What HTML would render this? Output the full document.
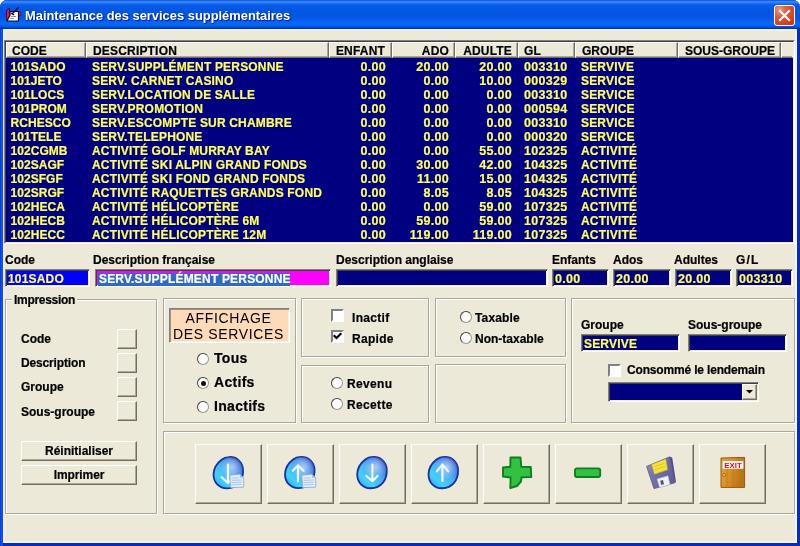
<!DOCTYPE html>
<html><head><meta charset="utf-8">
<style>
html,body{margin:0;padding:0;}
body{width:800px;height:546px;overflow:hidden;background:#fff;font-family:"Liberation Sans",sans-serif;font-weight:bold;font-size:12px;color:#000;position:relative;}
#win{position:absolute;left:0;top:0;width:800px;height:546px;background:linear-gradient(to right,#0A30D0 0px,#1656EE 1.5px,#0A46DA 3px,#0A2CB8 3px);border-radius:7px 7px 0 0;overflow:hidden;}
#title{position:absolute;left:0;top:0;width:800px;height:29px;background:linear-gradient(to bottom,#0A3FCB 0px,#2E7BF5 1px,#3A8CFF 2px,#2078F8 3px,#0A62EC 4.5px,#0458E4 7px,#0355E2 16px,#045AEA 19px,#0666F6 22px,#0568F8 25px,#0450DA 27px,#0236B4 28.5px,#002EA8 29px);}
#title .t{position:absolute;left:24.5px;top:8px;transform:scaleX(0.963);transform-origin:0 0;color:#fff;font-size:13.4px;font-weight:bold;text-shadow:1px 1px 1px #0A1883;white-space:nowrap;}
#client{position:absolute;left:3px;top:29px;width:794px;height:514px;background:#ECE9D8;box-sizing:border-box;border:1px solid #EEF3FF;box-shadow:inset 0 0 0 1px #F4F3EA;}
#close{position:absolute;left:774px;top:5px;width:21px;height:21px;border:1px solid #fff;border-radius:3px;background:radial-gradient(circle at 25% 20%,#EC9A82 0%,#DE5A36 35%,#D6451F 65%,#C2340F 100%);box-sizing:border-box;}
#list{position:absolute;left:4px;top:40px;width:791px;height:204px;box-sizing:border-box;border:1px solid #808080;border-right-color:#fff;border-bottom-color:#fff;background:#000080;}
#list .in{position:absolute;left:0;top:0;right:0;bottom:0;border:1px solid #404040;border-right-color:#F1EFE2;border-bottom-color:#F1EFE2;}
.hd{position:absolute;top:42px;height:16px;background:#ECE9D8;box-sizing:border-box;border:1px solid;border-color:#fff #716F64 #716F64 #fff;box-shadow:inset -1px -1px 0 #ACA899;font-size:12px;line-height:16px;padding-left:6px;white-space:nowrap;overflow:hidden;letter-spacing:0.18px;}
.hd.r{text-align:right;padding-right:6px;padding-left:0;}
.row{position:absolute;left:6px;width:787px;height:14px;color:#FFFF58;font-size:12px;line-height:14px;white-space:nowrap;letter-spacing:0.18px;}
.row span{position:absolute;top:0;}
.lbl{position:absolute;font-size:12px;line-height:14px;white-space:nowrap;}
.fld{position:absolute;height:18px;box-sizing:border-box;background:#000080;border:1px solid;border-color:#808080 #fff #fff #808080;box-shadow:inset 1px 1px 0 #404040, inset -1px -1px 0 #F1EFE2;color:#FFFF58;font-size:12px;line-height:14px;padding-left:2px;padding-top:2px;letter-spacing:0.18px;white-space:nowrap;overflow:hidden;}
.gb{position:absolute;box-sizing:border-box;border:1px solid #ACA899;box-shadow:1px 1px 0 #fff, inset 1px 1px 0 #fff;}
.btn{position:absolute;box-sizing:border-box;background:#ECE9D8;border:1px solid;border-color:#fff #716F64 #716F64 #fff;box-shadow:inset -1px -1px 0 #ACA899;text-align:center;}
.radio{position:absolute;width:12px;height:12px;box-sizing:border-box;border-radius:50%;background:#fff;border:1px solid;border-color:#404040 #9A988C #9A988C #404040;transform:rotate(0deg);}
.chk{position:absolute;width:13px;height:13px;box-sizing:border-box;background:#fff;border:2px solid;border-color:#808080 #fff #fff #808080;}
.n{font-size:12.5px;letter-spacing:0.3px;}
.lbl.big{font-size:14px;letter-spacing:0.3px;}
.radio.on::after{content:"";position:absolute;left:2.5px;top:2.5px;width:5px;height:5px;border-radius:50%;background:#111;}
.hd.last{border-right-color:#ECE9D8;box-shadow:inset 0 -1px 0 #ACA899;}
#root{position:absolute;left:0;top:0;width:800px;height:546px;will-change:transform;}
.row,.fld,.hd,.lbl,.btn{-webkit-text-stroke:0.2px currentColor;}

</style></head><body><div id="root">
<div id="win">
<div id="title"><div class="t">Maintenance des services supplémentaires</div></div>
<div id="client"></div>
</div>
<div id="list"><div class="in"></div></div>
<div class="hd" style="left:6px;width:80px;padding-left:5px;letter-spacing:0">CODE</div>
<div class="hd" style="left:86px;width:243px;">DESCRIPTION</div>
<div class="hd r" style="left:329px;width:63px;">ENFANT</div>
<div class="hd r" style="left:392px;width:63px;padding-right:5px">ADO</div>
<div class="hd r" style="left:455px;width:63px;padding-right:5px">ADULTE</div>
<div class="hd" style="left:518px;width:57px;padding-left:5px">GL</div>
<div class="hd" style="left:575px;width:103px;letter-spacing:0">GROUPE</div>
<div class="hd" style="left:678px;width:103px;letter-spacing:0">SOUS-GROUPE</div>
<div class="hd last" style="left:781px;width:12px;"></div>
<div class="row" style="top:60px"><span style="left:4.5px;letter-spacing:0.05px">101SADO</span><span style="left:86px">SERV.SUPPLÉMENT PERSONNE</span><span class="n" style="right:407px">0.00</span><span class="n" style="right:344px">20.00</span><span class="n" style="right:281px">20.00</span><span class="n" style="left:518px">003310</span><span style="left:575px">SERVIVE</span></div>
<div class="row" style="top:74px"><span style="left:4.5px;letter-spacing:0.05px">101JETO</span><span style="left:86px">SERV. CARNET CASINO</span><span class="n" style="right:407px">0.00</span><span class="n" style="right:344px">0.00</span><span class="n" style="right:281px">10.00</span><span class="n" style="left:518px">000329</span><span style="left:575px">SERVICE</span></div>
<div class="row" style="top:88px"><span style="left:4.5px;letter-spacing:0.05px">101LOCS</span><span style="left:86px">SERV.LOCATION DE SALLE</span><span class="n" style="right:407px">0.00</span><span class="n" style="right:344px">0.00</span><span class="n" style="right:281px">0.00</span><span class="n" style="left:518px">003310</span><span style="left:575px">SERVICE</span></div>
<div class="row" style="top:102px"><span style="left:4.5px;letter-spacing:0.05px">101PROM</span><span style="left:86px">SERV.PROMOTION</span><span class="n" style="right:407px">0.00</span><span class="n" style="right:344px">0.00</span><span class="n" style="right:281px">0.00</span><span class="n" style="left:518px">000594</span><span style="left:575px">SERVICE</span></div>
<div class="row" style="top:116px"><span style="left:4.5px;letter-spacing:0.05px">RCHESCO</span><span style="left:86px">SERV.ESCOMPTE SUR CHAMBRE</span><span class="n" style="right:407px">0.00</span><span class="n" style="right:344px">0.00</span><span class="n" style="right:281px">0.00</span><span class="n" style="left:518px">003310</span><span style="left:575px">SERVICE</span></div>
<div class="row" style="top:130px"><span style="left:4.5px;letter-spacing:0.05px">101TELE</span><span style="left:86px">SERV.TELEPHONE</span><span class="n" style="right:407px">0.00</span><span class="n" style="right:344px">0.00</span><span class="n" style="right:281px">0.00</span><span class="n" style="left:518px">000320</span><span style="left:575px">SERVICE</span></div>
<div class="row" style="top:144px"><span style="left:4.5px;letter-spacing:0.05px">102CGMB</span><span style="left:86px">ACTIVITÉ GOLF MURRAY BAY</span><span class="n" style="right:407px">0.00</span><span class="n" style="right:344px">0.00</span><span class="n" style="right:281px">55.00</span><span class="n" style="left:518px">102325</span><span style="left:575px">ACTIVITÉ</span></div>
<div class="row" style="top:158px"><span style="left:4.5px;letter-spacing:0.05px">102SAGF</span><span style="left:86px">ACTIVITÉ SKI ALPIN GRAND FONDS</span><span class="n" style="right:407px">0.00</span><span class="n" style="right:344px">30.00</span><span class="n" style="right:281px">42.00</span><span class="n" style="left:518px">104325</span><span style="left:575px">ACTIVITÉ</span></div>
<div class="row" style="top:172px"><span style="left:4.5px;letter-spacing:0.05px">102SFGF</span><span style="left:86px">ACTIVITÉ SKI FOND GRAND FONDS</span><span class="n" style="right:407px">0.00</span><span class="n" style="right:344px">11.00</span><span class="n" style="right:281px">15.00</span><span class="n" style="left:518px">104325</span><span style="left:575px">ACTIVITÉ</span></div>
<div class="row" style="top:186px"><span style="left:4.5px;letter-spacing:0.05px">102SRGF</span><span style="left:86px">ACTIVITÉ RAQUETTES GRANDS FOND</span><span class="n" style="right:407px">0.00</span><span class="n" style="right:344px">8.05</span><span class="n" style="right:281px">8.05</span><span class="n" style="left:518px">104325</span><span style="left:575px">ACTIVITÉ</span></div>
<div class="row" style="top:200px"><span style="left:4.5px;letter-spacing:0.05px">102HECA</span><span style="left:86px">ACTIVITÉ HÉLICOPTÈRE</span><span class="n" style="right:407px">0.00</span><span class="n" style="right:344px">0.00</span><span class="n" style="right:281px">59.00</span><span class="n" style="left:518px">107325</span><span style="left:575px">ACTIVITÉ</span></div>
<div class="row" style="top:214px"><span style="left:4.5px;letter-spacing:0.05px">102HECB</span><span style="left:86px">ACTIVITÉ HÉLICOPTÈRE 6M</span><span class="n" style="right:407px">0.00</span><span class="n" style="right:344px">59.00</span><span class="n" style="right:281px">59.00</span><span class="n" style="left:518px">107325</span><span style="left:575px">ACTIVITÉ</span></div>
<div class="row" style="top:228px"><span style="left:4.5px;letter-spacing:0.05px">102HECC</span><span style="left:86px">ACTIVITÉ HÉLICOPTÈRE 12M</span><span class="n" style="right:407px">0.00</span><span class="n" style="right:344px">119.00</span><span class="n" style="right:281px">119.00</span><span class="n" style="left:518px">107325</span><span style="left:575px">ACTIVITÉ</span></div>
<div id="close"><svg width="19" height="19" viewBox="0 0 19 19" style="position:absolute;left:0;top:0"><path d="M5 5 L14 14 M14 5 L5 14" stroke="#fff" stroke-width="2.2" stroke-linecap="square"/></svg></div>
<svg width="18" height="18" viewBox="0 0 18 18" style="position:absolute;left:4px;top:5px">
<path d="M2.5 5.5 L5.5 3.5 L5.5 13.5 L2.5 14.5 Z" fill="#E0145A" stroke="#3A0828" stroke-width="0.8"/>
<path d="M3 16 L6 10 L6 6.5 L14.5 6.5 L14.5 16 Z" fill="#fff" stroke="#200818" stroke-width="1.2"/>
<path d="M7 11.5 L12 11.5 M6.5 13.5 L10 13.5" stroke="#9A8A90" stroke-width="1"/>
<path d="M14.5 2.5 L8 9" stroke="#2A1050" stroke-width="1.6"/>
<path d="M7 8 L10 10" stroke="#200818" stroke-width="1.5"/>
<rect x="15" y="7" width="1.8" height="3.5" fill="#E0145A" stroke="#3A0828" stroke-width="0.5"/>
</svg>
<div class="lbl" style="left:5px;top:253px">Code</div>
<div class="lbl" style="left:93px;top:253px">Description française</div>
<div class="lbl" style="left:336px;top:253px">Description anglaise</div>
<div class="lbl" style="left:552px;top:253px">Enfants</div>
<div class="lbl" style="left:613px;top:253px">Ados</div>
<div class="lbl" style="left:674px;top:253px">Adultes</div>
<div class="lbl" style="left:736px;top:253px;letter-spacing:1.2px">G/L</div>
<div class="fld" style="left:5px;top:269px;width:85px;background:#0000FF">101SADO</div>
<div class="fld" style="left:95px;top:269px;width:236px;background:#FF00FF;padding:0"><span style="display:block;position:absolute;left:2px;top:3px;height:13px;width:191px;background:#316AC5;color:#fff;padding-left:1px;line-height:13px;letter-spacing:0.18px">SERV.SUPPLÉMENT PERSONNE</span></div>
<div class="fld" style="left:336px;top:269px;width:212px"></div>
<div class="fld" style="left:552px;top:269px;width:57px"><span class="n">0.00</span></div>
<div class="fld" style="left:613px;top:269px;width:58px"><span class="n">20.00</span></div>
<div class="fld" style="left:675px;top:269px;width:57px"><span class="n">20.00</span></div>
<div class="fld" style="left:736px;top:269px;width:57px"><span class="n">003310</span></div>

<div class="gb" style="left:5px;top:299px;width:152px;height:215px"></div>
<div class="lbl" style="left:12px;top:293px;background:#ECE9D8;padding:0 2px;letter-spacing:-0.3px">Impression</div>
<div class="lbl" style="left:21px;top:332px">Code</div>
<div class="lbl" style="left:21px;top:356px;letter-spacing:-0.15px">Description</div>
<div class="lbl" style="left:21px;top:380px">Groupe</div>
<div class="lbl" style="left:21px;top:405px">Sous-groupe</div>
<div class="btn" style="left:117px;top:329px;width:20px;height:20px"></div>
<div class="btn" style="left:117px;top:353px;width:20px;height:20px"></div>
<div class="btn" style="left:117px;top:377px;width:20px;height:20px"></div>
<div class="btn" style="left:117px;top:401px;width:20px;height:20px"></div>
<div class="btn" style="left:21px;top:441px;width:116px;height:20px;line-height:18px;letter-spacing:0px">Réinitialiser</div>
<div class="btn" style="left:21px;top:465px;width:116px;height:20px;line-height:18px;letter-spacing:-0.1px">Imprimer</div>

<div class="gb" style="left:163px;top:298px;width:133px;height:125px"></div>
<div style="position:absolute;left:169px;top:308px;width:121px;height:35px;box-sizing:border-box;background:#FFDAB9;border:1px solid;border-color:#808080 #fff #fff #808080;box-shadow:inset 1px 1px 0 #A09080, inset -1px -1px 0 #F8EEE0;font-weight:normal;font-size:14px;line-height:16px;text-align:center;letter-spacing:0.65px;padding-top:1px;padding-right:2px">AFFICHAGE<br>DES SERVICES</div>
<div class="radio" style="left:197px;top:353px"></div>
<div class="radio on" style="left:197px;top:377px"></div>
<div class="radio" style="left:197px;top:401px"></div>
<div class="lbl big" style="left:214px;top:351px">Tous</div>
<div class="lbl big" style="left:214px;top:375px">Actifs</div>
<div class="lbl big" style="left:214px;top:399px">Inactifs</div>

<div class="gb" style="left:301px;top:298px;width:128px;height:59px"></div>
<div class="gb" style="left:301px;top:365px;width:128px;height:58px"></div>
<div class="gb" style="left:435px;top:298px;width:131px;height:59px"></div>
<div class="gb" style="left:435px;top:364px;width:131px;height:59px"></div>
<div class="gb" style="left:571px;top:298px;width:224px;height:125px"></div>
<div class="gb" style="left:163px;top:431px;width:632px;height:83px"></div>

<div class="chk" style="left:331px;top:309px"></div>
<div class="chk" style="left:331px;top:330px"><svg width="13" height="13" viewBox="0 0 13 13" style="position:absolute;left:-2px;top:-2px"><path d="M3.5 6 L5.5 8 L9.5 4" stroke="#000" stroke-width="2.2" fill="none" stroke-linecap="square" stroke-linejoin="miter"/></svg></div>
<div class="lbl" style="left:352px;top:311px;letter-spacing:0.3px">Inactif</div>
<div class="lbl" style="left:352px;top:332px;letter-spacing:0.3px">Rapide</div>
<div class="radio" style="left:331px;top:377px"></div>
<div class="radio" style="left:331px;top:398px"></div>
<div class="lbl" style="left:347px;top:377px;letter-spacing:0.35px">Revenu</div>
<div class="lbl" style="left:347px;top:398px;letter-spacing:0.35px">Recette</div>
<div class="radio" style="left:460px;top:311px"></div>
<div class="radio" style="left:460px;top:332px"></div>
<div class="lbl" style="left:475px;top:311px;letter-spacing:0.15px">Taxable</div>
<div class="lbl" style="left:475px;top:332px">Non-taxable</div>

<div class="lbl" style="left:581px;top:318px">Groupe</div>
<div class="lbl" style="left:688px;top:318px">Sous-groupe</div>
<div class="fld" style="left:581px;top:334px;width:99px">SERVIVE</div>
<div class="fld" style="left:688px;top:334px;width:99px"></div>
<div class="chk" style="left:608px;top:364px"></div>
<div class="lbl" style="left:627px;top:363px;letter-spacing:-0.17px">Consommé le lendemain</div>
<div class="fld" style="left:608px;top:382px;width:151px;height:20px"><div class="btn" style="right:1px;top:1px;width:15px;height:16px"><svg width="13" height="13" viewBox="0 0 13 13" style="position:absolute;left:0;top:0"><path d="M3 5 L10 5 L6.5 8.5 Z" fill="#000"/></svg></div></div>

<div class="btn" style="left:195px;top:444px;width:67px;height:60px"></div>
<div class="btn" style="left:267px;top:444px;width:67px;height:60px"></div>
<div class="btn" style="left:339px;top:444px;width:67px;height:60px"></div>
<div class="btn" style="left:411px;top:444px;width:67px;height:60px"></div>
<div class="btn" style="left:483px;top:444px;width:67px;height:60px"></div>
<div class="btn" style="left:555px;top:444px;width:67px;height:60px"></div>
<div class="btn" style="left:627px;top:444px;width:67px;height:60px"></div>
<div class="btn" style="left:699px;top:444px;width:67px;height:60px"></div>
<svg width="800" height="546" viewBox="0 0 800 546" style="position:absolute;left:0;top:0;pointer-events:none">
<defs>
<linearGradient id="bg1" x1="0.85" y1="0.1" x2="0.15" y2="0.9">
<stop offset="0" stop-color="#2C4CC4"/><stop offset="0.22" stop-color="#3C80E6"/><stop offset="0.5" stop-color="#48B4F6"/><stop offset="0.8" stop-color="#44D0FF"/><stop offset="1" stop-color="#34B0F4"/>
</linearGradient>
<radialGradient id="hl" cx="0.62" cy="0.32" r="0.4"><stop offset="0" stop-color="#C8DCFA" stop-opacity="0.8"/><stop offset="1" stop-color="#C8DCFA" stop-opacity="0"/></radialGradient>
<linearGradient id="door" x1="0" y1="0" x2="1" y2="0.3"><stop offset="0" stop-color="#E9A437"/><stop offset="0.5" stop-color="#D88E24"/><stop offset="1" stop-color="#B97318"/></linearGradient>
<linearGradient id="flop" x1="0" y1="0" x2="1" y2="0.5"><stop offset="0" stop-color="#9494C8"/><stop offset="0.4" stop-color="#7474AE"/><stop offset="1" stop-color="#606098"/></linearGradient>
</defs>
<!-- icon1 -->
<g transform="translate(228.3,472.7)"><path d="M0.48 -15.63 C7.72 -16.41 14.28 -11.10 14.76 -2.90 C15.25 7.72 8.69 15.44 -0.96 15.63 C-9.17 15.83 -15.05 9.65 -14.76 1.45 C-14.47 -4.83 -10.62 -10.13 -6.75 -13.03 C-4.34 -14.76 -1.93 -15.44 0.48 -15.63 Z" fill="url(#bg1)" stroke="#17339A" stroke-width="1.8"/>
<path d="M0.48 -15.63 C7.72 -16.41 14.28 -11.10 14.76 -2.90 C15.25 7.72 8.69 15.44 -0.96 15.63 C-9.17 15.83 -15.05 9.65 -14.76 1.45 C-14.47 -4.83 -10.62 -10.13 -6.75 -13.03 C-4.34 -14.76 -1.93 -15.44 0.48 -15.63 Z" fill="url(#hl)"/>
<path d="M-0.3 -8 L-0.3 10 M-6.5 4.5 L-0.3 10.3 L2 8" stroke="#F4F8FF" stroke-width="2.2" fill="none" stroke-linecap="round" stroke-linejoin="round"/></g>
<g transform="translate(229.7,474.2)"><path d="M0 1 L10 0 L14 3.5 L14 13 L1 13.5 Z" fill="#DDEBFA" stroke="#8FA8C8" stroke-width="0.8"/>
<path d="M10 0 L10.5 3.5 L14 3.5 Z" fill="#A8BCD8"/>
<path d="M2 4 L9 3.7 M2 6.2 L12 5.9 M2 8.4 L12 8.1 M2 10.6 L12 10.3" stroke="#A9C4E6" stroke-width="0.9"/></g>
<!-- icon2 -->
<g transform="translate(299.8,472.5)"><path d="M0.48 -15.63 C7.72 -16.41 14.28 -11.10 14.76 -2.90 C15.25 7.72 8.69 15.44 -0.96 15.63 C-9.17 15.83 -15.05 9.65 -14.76 1.45 C-14.47 -4.83 -10.62 -10.13 -6.75 -13.03 C-4.34 -14.76 -1.93 -15.44 0.48 -15.63 Z" fill="url(#bg1)" stroke="#17339A" stroke-width="1.8"/>
<path d="M0.48 -15.63 C7.72 -16.41 14.28 -11.10 14.76 -2.90 C15.25 7.72 8.69 15.44 -0.96 15.63 C-9.17 15.83 -15.05 9.65 -14.76 1.45 C-14.47 -4.83 -10.62 -10.13 -6.75 -13.03 C-4.34 -14.76 -1.93 -15.44 0.48 -15.63 Z" fill="url(#hl)"/>
<path d="M-1.8 9 L-1.8 -6.5 M-7 -1.8 L-1.8 -7 L3.8 -1.8" stroke="#F4F8FF" stroke-width="2.2" fill="none" stroke-linecap="round" stroke-linejoin="round"/></g>
<g transform="translate(301.7,474.2)"><path d="M0 1 L10 0 L14 3.5 L14 13 L1 13.5 Z" fill="#DDEBFA" stroke="#8FA8C8" stroke-width="0.8"/>
<path d="M10 0 L10.5 3.5 L14 3.5 Z" fill="#A8BCD8"/>
<path d="M2 4 L9 3.7 M2 6.2 L12 5.9 M2 8.4 L12 8.1 M2 10.6 L12 10.3" stroke="#A9C4E6" stroke-width="0.9"/></g>
<!-- icon3 -->
<g transform="translate(372,472.6)"><path d="M0.48 -15.63 C7.72 -16.41 14.28 -11.10 14.76 -2.90 C15.25 7.72 8.69 15.44 -0.96 15.63 C-9.17 15.83 -15.05 9.65 -14.76 1.45 C-14.47 -4.83 -10.62 -10.13 -6.75 -13.03 C-4.34 -14.76 -1.93 -15.44 0.48 -15.63 Z" fill="url(#bg1)" stroke="#17339A" stroke-width="1.8"/>
<path d="M0.48 -15.63 C7.72 -16.41 14.28 -11.10 14.76 -2.90 C15.25 7.72 8.69 15.44 -0.96 15.63 C-9.17 15.83 -15.05 9.65 -14.76 1.45 C-14.47 -4.83 -10.62 -10.13 -6.75 -13.03 C-4.34 -14.76 -1.93 -15.44 0.48 -15.63 Z" fill="url(#hl)"/>
<path d="M0.4 -8 L0.4 8.2 M-5.8 3.3 L0.4 8.6 L5.6 3.3" stroke="#F4F8FF" stroke-width="2.2" fill="none" stroke-linecap="round" stroke-linejoin="round"/></g>
<!-- icon4 -->
<g transform="translate(443.3,472.6)"><path d="M0.48 -15.63 C7.72 -16.41 14.28 -11.10 14.76 -2.90 C15.25 7.72 8.69 15.44 -0.96 15.63 C-9.17 15.83 -15.05 9.65 -14.76 1.45 C-14.47 -4.83 -10.62 -10.13 -6.75 -13.03 C-4.34 -14.76 -1.93 -15.44 0.48 -15.63 Z" fill="url(#bg1)" stroke="#17339A" stroke-width="1.8"/>
<path d="M0.48 -15.63 C7.72 -16.41 14.28 -11.10 14.76 -2.90 C15.25 7.72 8.69 15.44 -0.96 15.63 C-9.17 15.83 -15.05 9.65 -14.76 1.45 C-14.47 -4.83 -10.62 -10.13 -6.75 -13.03 C-4.34 -14.76 -1.93 -15.44 0.48 -15.63 Z" fill="url(#hl)"/>
<path d="M-0.9 8.4 L-0.9 -8 M-6.5 -1.2 L-0.9 -8.2 L4.9 -1.2" stroke="#F4F8FF" stroke-width="2.2" fill="none" stroke-linecap="round" stroke-linejoin="round"/></g>
<!-- plus -->
<path d="M510.5 457.5 L520.5 457.5 L521.3 466.8 L530.8 467 L531.3 477 L521.5 477.3 L521 481.5 L517 486 L510.3 488 L510.6 477.5 L503 476.5 L503 467.5 L510.3 466.8 Z" fill="#31C243" stroke="#0F7E1D" stroke-width="1.9" stroke-linejoin="round"/>
<!-- minus -->
<rect x="575" y="468.4" width="25.2" height="8.6" rx="2" fill="#31C243" stroke="#0F7E1D" stroke-width="1.9"/>
<!-- floppy -->
<path d="M646.6 466.4 L669.8 456.8 L674.8 482.8 L654 488.6 Z" fill="url(#flop)" stroke="#56568C" stroke-width="0.8"/>
<path d="M669.8 456.8 L672.2 457.6 L676 482 L674.8 482.8 Z" fill="#4E4E88"/>
<path d="M651.6 464.5 L665.8 459 L667.6 469.8 L654.4 474.2 Z" fill="#F6E03C" stroke="#C8B020" stroke-width="0.5"/>
<path d="M653.5 467 L664.5 463.2 M654.2 470 L665.2 466.3" stroke="#D8C030" stroke-width="0.8"/>
<path d="M657 479 L668 475.8 L670 484.6 L659.6 487.6 Z" fill="#F0F0F8" stroke="#B0B0C8" stroke-width="0.5"/>
<path d="M660.2 480.8 L663 480 L664 484.2 L661.2 485 Z" fill="#50507C"/>
<!-- exit -->
<path d="M721 458 L744.6 457.4 L744.6 487.4 L721 487.4 Z" fill="url(#door)" stroke="#94580E" stroke-width="1"/>
<path d="M727 470 L727 486 M733 470 L733 486 M739 470 L739 486" stroke="#C07A18" stroke-width="0.8"/>
<rect x="722.6" y="461" width="20.8" height="7.8" fill="#FBF4F0"/>
<text x="733" y="467.6" text-anchor="middle" font-family="Liberation Sans, sans-serif" font-weight="bold" font-size="7.2" fill="#E01030" textLength="17.5" lengthAdjust="spacingAndGlyphs">EXIT</text>
<circle cx="724.2" cy="475" r="1.6" fill="#F0B040" stroke="#8A5510" stroke-width="0.6"/>
</svg>

</div></body></html>
